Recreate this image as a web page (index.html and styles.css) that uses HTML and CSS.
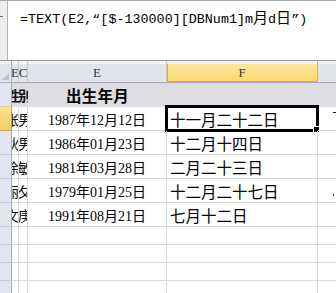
FILE: index.html
```html
<!DOCTYPE html>
<html lang="zh">
<head>
<meta charset="utf-8">
<link rel="stylesheet" href="styles.css">
</head>
<body>
<div class="fx">
  <div class="fx-left"><span class="fx-mark"></span></div>
  <div class="fx-text">=TEXT(E2,“[$-130000][DBNum1]m<span class="cj">月</span>d<span class="cj">日</span>”)</div>
</div>
<div class="sheet">
  <div class="corner"><span class="tri"></span></div>
  <div class="ch"><span class="cut-r">E</span></div>
  <div class="ch"><span class="cut-l">C</span></div>
  <div class="ch">E</div>
  <div class="ch ch-act">F</div>
  <div class="ch ch-last"></div>

  <div class="rh"></div>
  <div class="c t n1 bold"><span>性</span></div>
  <div class="c t n2 bold"><span>别</span></div>
  <div class="c t title">出生年月</div>
  <div class="c t"></div>
  <div class="c t"></div>

  <div class="rh rh-act"></div>
  <div class="c n1"><span>张</span></div>
  <div class="c n2"><span>男</span></div>
  <div class="c d">1987年12月12日</div>
  <div class="c f act">十一月二十二日<span class="sel"><span class="handle"></span></span></div>
  <div class="c g"><span class="frag"></span></div>

  <div class="rh"></div>
  <div class="c n1"><span>狄</span></div>
  <div class="c n2"><span>男</span></div>
  <div class="c d">1986年01月23日</div>
  <div class="c f">十二月十四日</div>
  <div class="c g"></div>

  <div class="rh"></div>
  <div class="c n1"><span>徐</span></div>
  <div class="c n2"><span>敏</span></div>
  <div class="c d">1981年03月28日</div>
  <div class="c f">二月二十三日</div>
  <div class="c g"></div>

  <div class="rh"></div>
  <div class="c n1"><span>丽</span></div>
  <div class="c n2"><span>攵</span></div>
  <div class="c d">1979年01月25日</div>
  <div class="c f">十二月二十七日</div>
  <div class="c g"><span class="dot"></span></div>

  <div class="rh"></div>
  <div class="c n1"><span>文</span></div>
  <div class="c n2"><span>庚</span></div>
  <div class="c d">1991年08月21日</div>
  <div class="c f">七月十二日</div>
  <div class="c g"></div>

  <div class="rh"></div><div class="c"></div><div class="c"></div><div class="c"></div><div class="c"></div><div class="c g"></div>
  <div class="rh"></div><div class="c"></div><div class="c"></div><div class="c"></div><div class="c"></div><div class="c g"></div>
  <div class="rh"></div><div class="c"></div><div class="c"></div><div class="c"></div><div class="c"></div><div class="c g"></div>
  <div class="rh"></div><div class="c"></div><div class="c"></div><div class="c"></div><div class="c"></div><div class="c g"></div>
</div>
</body>
</html>
```
FILE: styles.css
```css
* { box-sizing: border-box; }
html, body { margin: 0; padding: 0; }
body {
  width: 336px;
  height: 293px;
  overflow: hidden;
  background: #ffffff;
  font-family: "Liberation Serif", "Noto Sans CJK SC", serif;
}

.fx {
  display: flex;
  height: 61px;
  border-top: 1px solid #a7a7a7;
  border-bottom: 1px solid #9c9c9c;
  background: #ffffff;
}
.fx-left {
  width: 8px;
  flex: none;
  background: #eceef1;
  border-right: 1px solid #b4b4b4;
  position: relative;
}
.fx-mark {
  position: absolute;
  left: 0;
  top: 15px;
  width: 3px;
  height: 1px;
  background: #6e6e6e;
}
.fx-text {
  padding: 8px 0 0 12px;
  font-family: "Liberation Mono", "Noto Sans CJK SC", monospace;
  font-size: 13.4px;
  line-height: 16px;
  color: #000;
  white-space: nowrap;
}
.fx-text .cj {
  font-family: "Noto Sans CJK SC", sans-serif;
  font-size: 15px;
  line-height: 16px;
}

.sheet {
  display: grid;
  grid-template-columns: 12px 7px 9px 139px 151px 18px;
  grid-template-rows: 22px repeat(6, 24px) repeat(4, 18px);
}

.corner {
  background: linear-gradient(#eef0f4 0 3px, #dfe3ea 3px);
  border-right: 1px solid #a9b0bc;
  border-bottom: 1px solid #a9b0bc;
  position: relative;
}
.tri {
  position: absolute;
  right: 2px;
  bottom: 2px;
  width: 0;
  height: 0;
  border-left: 7px solid transparent;
  border-bottom: 7px solid #bcc2cb;
}
.ch {
  background: linear-gradient(#f1f2f4 0 3px, #e1e5eb 3px);
  border-right: 1px solid #c3c8cf;
  border-bottom: 1px solid #9fa7b3;
  display: flex;
  align-items: center;
  justify-content: center;
  padding-top: 3px;
  font-size: 13px;
  color: #333;
  overflow: hidden;
}
.ch .cut-r, .ch .cut-l { display: block; }
.ch-act {
  background: linear-gradient(#f1f2f4 0 3px, #fde7a0 3px, #f9d86f);
  box-shadow: inset 0 3px 0 #f1f2f4, inset 1px 0 0 #e0ab45, inset 0 -1px 0 #e0ab45;
  border-right: 1px solid #e0ab45;
}
.ch-last { border-right: none; }

.rh {
  background: #e3e6f0;
  border-right: 1px solid #a7adbb;
  border-bottom: 1px solid #c9cdd9;
}
.rh-act {
  background: linear-gradient(#fbe08e, #f7cf63);
  border-right: 1px solid #d99b30;
  border-bottom: 1px solid #d99b30;
}

.c {
  border-right: 1px solid #d8d8d8;
  border-bottom: 1px solid #d8d8d8;
  position: relative;
  overflow: visible;
  white-space: nowrap;
}
.c.g { border-right: none; }
.c.t {
  background: #dedde1;
  border-right: none;
  border-bottom: 1px solid #dedde1;
}

.n1, .n2 {
  overflow: hidden;
  display: flex;
  align-items: center;
  font-family: "Noto Sans CJK SC", sans-serif;
  font-size: 14px;
  color: #111;
}
.n1 { justify-content: flex-end; }
.n2 { justify-content: flex-start; }
.n1 span { margin-right: -1px; }
.n2 span { margin-left: -1px; }
.bold { font-weight: 700; }

.title {
  display: flex;
  align-items: center;
  justify-content: center;
  font-family: "Noto Sans CJK SC", sans-serif;
  font-weight: 700;
  font-size: 15.5px;
  letter-spacing: 0.3px;
  color: #000;
  padding-top: 1px;
}

.d {
  display: flex;
  align-items: center;
  justify-content: center;
  font-family: "Liberation Serif", "Noto Sans CJK SC", serif;
  font-size: 14px;
  color: #000;
  padding-top: 1px;
}

.f {
  display: flex;
  align-items: center;
  padding-left: 3px;
  padding-top: 1px;
  font-family: "Noto Sans CJK SC", sans-serif;
  font-size: 15.5px;
  color: #000;
}

.sel {
  position: absolute;
  left: -2px;
  top: -2px;
  width: 154px;
  height: 27px;
  border: 3px solid #000;
}
.handle {
  position: absolute;
  right: -3px;
  bottom: -3px;
  width: 5px;
  height: 5px;
  background: #000;
  box-shadow: 0 0 0 1px #fff;
}

.frag {
  position: absolute;
  right: 0;
  top: 5px;
  width: 3px;
  height: 1px;
  background: #222;
}
.dot {
  position: absolute;
  right: 2px;
  top: 15px;
  width: 1px;
  height: 2px;
  background: #444;
}
```
